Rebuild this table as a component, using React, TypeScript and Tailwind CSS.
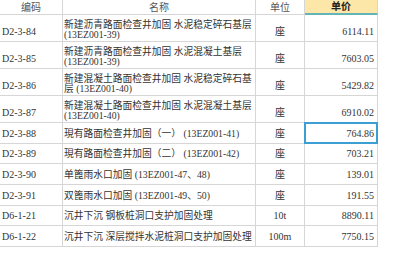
import React from "react"

interface Row {
  code: string
  name: string[]
  unit: string
  price: string
  h: string
  selected?: boolean
}

const rows: Row[] = [
  { code: "D2-3-84", name: ["新建沥青路面检查井加固 水泥稳定碎石基层", "(13EZ001-39)"], unit: "座", price: "6114.11", h: "h-[27px]" },
  { code: "D2-3-85", name: ["新建沥青路面检查井加固 水泥混凝土基层", "(13EZ001-39)"], unit: "座", price: "7603.05", h: "h-[27px]" },
  { code: "D2-3-86", name: ["新建混凝土路面检查井加固 水泥稳定碎石基", "层 (13EZ001-40)"], unit: "座", price: "5429.82", h: "h-[27px]" },
  { code: "D2-3-87", name: ["新建混凝土路面检查井加固 水泥混凝土基层", "(13EZ001-40)"], unit: "座", price: "6910.02", h: "h-[27px]" },
  { code: "D2-3-88", name: ["現有路面检查井加固（一） (13EZ001-41)"], unit: "座", price: "764.86", h: "h-[21px]", selected: true },
  { code: "D2-3-89", name: ["現有路面检查井加固（二） (13EZ001-42)"], unit: "座", price: "703.21", h: "h-[20px]" },
  { code: "D2-3-90", name: ["单篦雨水口加固 (13EZ001-47、48)"], unit: "座", price: "139.01", h: "h-[21px]" },
  { code: "D2-3-91", name: ["双篦雨水口加固 (13EZ001-49、50)"], unit: "座", price: "191.55", h: "h-[21px]" },
  { code: "D6-1-21", name: ["沉井下沉 钢板桩洞口支护加固处理"], unit: "10t", price: "8890.11", h: "h-[20px]" },
  { code: "D6-1-22", name: ["沉井下沉 深层搅拌水泥桩洞口支护加固处理"], unit: "100m", price: "7750.15", h: "h-[21px]" },
]

export default function App() {
  const cell = "border-r border-b border-[#d6d6d6] flex items-end overflow-hidden whitespace-nowrap"

  return (
    <div className="w-[400px] h-[255px] bg-white text-[#333] text-[10px] leading-[11px] [font-family:'Liberation_Serif','Noto_Sans_CJK_SC',serif]">
      <div className="grid grid-cols-[63px_193px_49px_73px]">
        {/* header */}
        <div className="h-[15px] border-r border-b border-[#d6d6d6] flex items-center justify-center text-[#555]">编码</div>
        <div className="h-[15px] border-r border-b border-[#d6d6d6] flex items-center justify-center text-[#555]">名称</div>
        <div className="h-[15px] border-r border-b border-[#d6d6d6] flex items-center justify-center text-[#555]">单位</div>
        <div className="h-[15px] border-r border-[#d6d6d6] border-b-2 border-b-[#62b4b6] bg-[#fde7a8] flex items-center justify-center font-bold text-[#222]">
          单价
        </div>

        {rows.map((r) => (
          <React.Fragment key={r.code}>
            <div className={`${cell} ${r.h} pl-[2px] pb-[4px]`}>{r.code}</div>
            <div className={`${cell} ${r.h} pl-[1px] text-[9.75px] ${r.name.length > 1 ? "pb-[1px]" : "pb-[4px]"}`}>
              <div className="flex flex-col">
                {r.name.map((line, i) => (
                  <span key={i} className={r.name.length > 1 ? "leading-[10px]" : "leading-[11px]"}>
                    {line}
                  </span>
                ))}
              </div>
            </div>
            <div className={`${cell} ${r.h} justify-center pb-[4px]`}>{r.unit}</div>
            <div className={`${cell} ${r.h} justify-end pr-[3px] pb-[4px] relative overflow-visible`}>
              {r.price}
              {r.selected && (
                <div className="absolute -top-px -left-px -right-px -bottom-px border-2 border-[#3c9fd4]" />
              )}
            </div>
          </React.Fragment>
        ))}
      </div>
    </div>
  )
}
